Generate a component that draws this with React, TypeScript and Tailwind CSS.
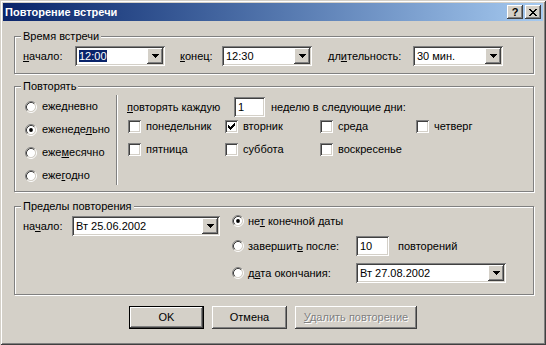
import React from 'react'

const SUNKEN =
  'bg-white shadow-[inset_1px_1px_0_#808080,inset_-1px_-1px_0_#ffffff,inset_2px_2px_0_#404040,inset_-2px_-2px_0_#d4d0c8]'
const RAISED =
  'bg-[#d4d0c8] shadow-[inset_-1px_-1px_0_#404040,inset_1px_1px_0_#ffffff,inset_-2px_-2px_0_#808080,inset_2px_2px_0_#d4d0c8]'

const ARROW = ['xxxxxxx', '.xxxxx.', '..xxx..', '...x...']
const CHECK = ['......x', '.....xx', 'x...xxx', 'xx.xxx.', 'xxxxx..', '.xxx...', '..x....']
const CLOSE = ['xx....xx', '.xx..xx.', '..xxxx..', '...xx...', '..xxxx..', '.xx..xx.', 'xx....xx']

function Pixels({ rows, color = '#000000' }: { rows: string[]; color?: string }) {
  const w = rows[0].length
  const h = rows.length
  return (
    <svg width={w} height={h} viewBox={`0 0 ${w} ${h}`} shapeRendering="crispEdges">
      {rows.flatMap((r, y) =>
        [...r].map((c, x) => (c === 'x' ? <rect key={`${x}-${y}`} x={x} y={y} width={1} height={1} fill={color} /> : null)),
      )}
    </svg>
  )
}

function Radio({ checked }: { checked?: boolean }) {
  return (
    <svg width="12" height="12" viewBox="0 0 12 12" className="shrink-0">
      <circle cx="6" cy="6" r="4.2" fill="#ffffff" />
      <path d="M2.11 9.89 A5.5 5.5 0 0 1 9.89 2.11" fill="none" stroke="#808080" />
      <path d="M9.89 2.11 A5.5 5.5 0 0 1 2.11 9.89" fill="none" stroke="#ffffff" />
      <path d="M2.82 9.18 A4.5 4.5 0 0 1 9.18 2.82" fill="none" stroke="#404040" />
      <path d="M9.18 2.82 A4.5 4.5 0 0 1 2.82 9.18" fill="none" stroke="#d4d0c8" />
      {checked && <circle cx="6" cy="6" r="1.9" fill="#000000" />}
    </svg>
  )
}

function CheckBox({ checked }: { checked?: boolean }) {
  return <div className={`h-[13px] w-[13px] shrink-0 p-[3px] ${SUNKEN}`}>{checked && <Pixels rows={CHECK} />}</div>
}

function Combo({ className, value, selected }: { className: string; value: string; selected?: boolean }) {
  return (
    <div className={`flex h-[20px] items-center p-[2px] ${SUNKEN} ${className}`}>
      <div className="flex-1 truncate pl-[2px]">
        {selected ? <span className="bg-[#0a246a] text-white">{value}</span> : value}
      </div>
      <div className={`flex h-[16px] w-[16px] items-center justify-center ${RAISED}`}>
        <Pixels rows={ARROW} />
      </div>
    </div>
  )
}

function Group({ title, className, children }: { title: string; className?: string; children: React.ReactNode }) {
  return (
    <div className={`ml-[11px] w-[520px] border border-[#808080] shadow-[inset_1px_1px_0_#ffffff,1px_1px_0_#ffffff] ${className ?? ''}`}>
      <div className="-mt-[7px] -mb-[6px] ml-[6px] w-fit bg-[#d4d0c8] px-[2px] leading-[13px]">{title}</div>
      {children}
    </div>
  )
}

const PERIODS: { label: React.ReactNode; checked?: boolean }[] = [
  { label: <>еже<u>д</u>невно</> },
  { label: <>еженеде<u>л</u>ьно</>, checked: true },
  { label: <>еже<u>м</u>есячно</> },
  { label: <>еже<u>г</u>одно</> },
]

const DAYS: { label: string; checked?: boolean }[] = [
  { label: 'понедельник' },
  { label: 'вторник', checked: true },
  { label: 'среда' },
  { label: 'четверг' },
  { label: 'пятница' },
  { label: 'суббота' },
  { label: 'воскресенье' },
]

export default function App() {
  return (
    <div className="flex h-[345px] w-[546px] flex-col bg-[#d4d0c8] p-[3px] font-['Liberation_Sans',Arial,sans-serif] text-[11px] leading-[13px] text-black shadow-[inset_1px_1px_0_#d4d0c8,inset_-1px_-1px_0_#404040,inset_2px_2px_0_#ffffff,inset_-2px_-2px_0_#808080]">
      {/* заголовок */}
      <div className="flex h-[18px] items-center bg-linear-to-r from-[#0a246a] to-[#a6caf0] pl-[2px] pr-[2px]">
        <span className="flex-1 font-bold text-white">Повторение встречи</span>
        <div className="flex gap-[2px]">
          <div className={`flex h-[14px] w-[16px] items-center justify-center pt-[1px] font-bold leading-[13px] ${RAISED}`}>?</div>
          <div className={`flex h-[14px] w-[16px] items-center justify-center ${RAISED}`}>
            <Pixels rows={CLOSE} />
          </div>
        </div>
      </div>

      <Group title="Время встречи" className="mt-[15px]">
        <div className="flex items-center pl-[8px] pt-[9px] pb-[7px]">
          <span className="w-[52px]">
            <u>н</u>ачало:
          </span>
          <Combo className="w-[90px]" value="12:00" selected />
          <span className="ml-[15px] w-[42px]">
            <u>к</u>онец:
          </span>
          <Combo className="w-[90px]" value="12:30" />
          <span className="ml-[16px] w-[85px]">
            дл<u>и</u>тельность:
          </span>
          <Combo className="w-[90px]" value="30 мин." />
        </div>
      </Group>

      <Group title="Повторять" className="mt-[12px]">
        <div className="flex pt-[8px] pb-[4px]">
          <div className="flex w-[101px] flex-col pl-[10px]">
            {PERIODS.map((p, i) => (
              <div key={i} className="flex h-[23px] items-center gap-[5px]">
                <Radio checked={p.checked} />
                <span>{p.label}</span>
              </div>
            ))}
          </div>
          <div className="h-[90px] w-[2px] border-l border-r border-l-[#808080] border-r-white" />
          <div className="pl-[9px] pt-[2px]">
            <div className="flex h-[20px] items-center">
              <span className="w-[107px]">
                <u>п</u>овторять каждую
              </span>
              <div className={`h-[20px] w-[31px] pl-[4px] leading-[20px] ${SUNKEN}`}>1</div>
              <span className="ml-[6px]">неделю в следующие дни:</span>
            </div>
            <div className="ml-[1px] mt-[3px] grid grid-cols-[97px_95px_96px_auto] gap-y-[10px]">
              {DAYS.map((d) => (
                <div key={d.label} className="flex h-[13px] items-center gap-[5px]">
                  <CheckBox checked={d.checked} />
                  <span>{d.label}</span>
                </div>
              ))}
            </div>
          </div>
        </div>
      </Group>

      <Group title="Пределы повторения" className="mt-[14px]">
        <div className="flex items-start pl-[8px] pt-[4px] pb-[11px]">
          <div className="mt-[5px] flex h-[20px] items-center">
            <span className="w-[49px]">
              на<u>ч</u>ало:
            </span>
            <Combo className="w-[148px]" value="Вт 25.06.2002" />
          </div>
          <div className="ml-[12px] flex flex-col">
            <div className="flex h-[20px] items-center gap-[4px]">
              <Radio checked />
              <span>
                не<u>т</u> конечной даты
              </span>
            </div>
            <div className="mt-[5px] flex h-[20px] items-center gap-[4px]">
              <Radio />
              <span className="w-[104px]">
                завершит<u>ь</u> после:
              </span>
              <div className={`h-[20px] w-[33px] pl-[4px] leading-[20px] ${SUNKEN}`}>10</div>
              <span className="ml-[5px]">повторений</span>
            </div>
            <div className="mt-[7px] flex h-[20px] items-center gap-[4px]">
              <Radio />
              <span className="w-[104px]">
                д<u>а</u>та окончания:
              </span>
              <Combo className="w-[150px]" value="Вт 27.08.2002" />
            </div>
          </div>
        </div>
      </Group>

      <div className="mt-[11px] flex justify-center gap-[8px]">
        <div className={`flex h-[23px] w-[75px] items-center justify-center border border-black ${RAISED}`}>OK</div>
        <div className={`flex h-[23px] w-[75px] items-center justify-center ${RAISED}`}>Отмена</div>
        <div className={`flex h-[23px] w-[122px] items-center justify-center text-[#808080] [text-shadow:1px_1px_0_#ffffff] ${RAISED}`}>
          <span>
            <u>У</u>далить повторение
          </span>
        </div>
      </div>
    </div>
  )
}
